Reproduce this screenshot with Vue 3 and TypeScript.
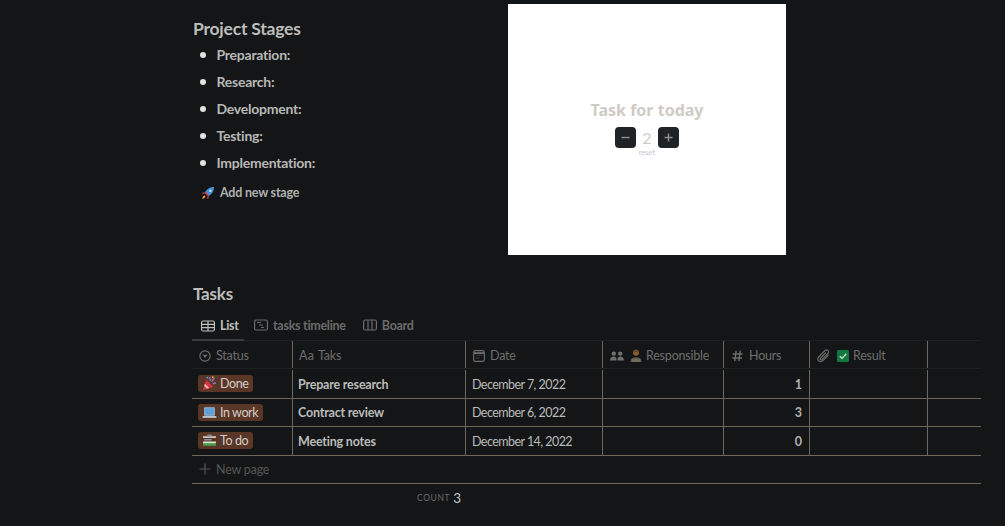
<script setup lang="ts">
interface Row { status: string; icon: string; task: string; date: string; hours: number }
const stages: string[] = ['Preparation:', 'Research:', 'Development:', 'Testing:', 'Implementation:']
const rows: Row[] = [
  { status: 'Done', icon: 'party', task: 'Prepare research', date: 'December 7, 2022', hours: 1 },
  { status: 'In work', icon: 'laptop', task: 'Contract review', date: 'December 6, 2022', hours: 3 },
  { status: 'To do', icon: 'todo', task: 'Meeting notes', date: 'December 14, 2022', hours: 0 }
]
</script>

<template>
  <main class="page">
    <section class="top">
      <div class="stages">
        <h2 class="h-stages">Project Stages</h2>
        <ul class="stage-list">
          <li v-for="s in stages" :key="s">{{ s }}</li>
        </ul>
        <div class="add">
          <svg class="rocket" width="14" height="14" viewBox="0 0 14 14">
            <path d="M13 1C9 1 5.500 3 4 6.500l3.500 3.500C11 8.500 13 5 13 1z" fill="#3f8fd6" />
            <path d="M4.500 6 7.500 9 6.500 10 3.500 7z" fill="#d9394a" />
            <circle cx="9.300" cy="4.700" r="1.300" fill="#bfe3f7" />
            <path d="M4 6 1.800 6.500 1 8.500 3.500 7.500zM8 10l-.5 2.200-2 .8 1-2.500z" fill="#c8384a" />
            <path d="M3.500 9.500C2 10 1.500 11.500 1 13c1.500-.5 3-1 3.500-2.500z" fill="#f2a33a" />
          </svg>
          <span>Add new stage</span>
        </div>
      </div>
      <div class="embed">
        <div class="embed-title">Task for today</div>
        <div class="counter">
          <span class="cbtn">
            <svg width="9" height="9" viewBox="0 0 9 9" stroke="#8f9192" stroke-width="1.400"><path d="M.5 4.500h8" /></svg>
          </span>
          <span class="cval">2</span>
          <span class="cbtn">
            <svg width="9" height="9" viewBox="0 0 9 9" stroke="#8f9192" stroke-width="1.400"><path d="M.5 4.500h8M4.500.5v8" /></svg>
          </span>
        </div>
        <div class="reset">reset</div>
      </div>
    </section>

    <h2 class="h-tasks">Tasks</h2>
    <nav class="tabs">
      <div class="tab active">
        <svg width="14" height="12" viewBox="0 0 14 12" fill="none" stroke="currentColor" stroke-width="1.200">
          <rect x=".6" y="1" width="12.800" height="10" rx="1.500" />
          <path d="M.6 4.300h12.800M.6 7.600h12.800M7 1v10" />
        </svg>
        <span>List</span>
      </div>
      <div class="tab">
        <svg width="14" height="12" viewBox="0 0 14 12" fill="none" stroke="currentColor" stroke-width="1.200">
          <rect x=".6" y="1" width="12.800" height="10" rx="1.500" />
          <path d="M3 3.500h4M5 6h4M7 8.500h3" />
        </svg>
        <span>tasks timeline</span>
      </div>
      <div class="tab">
        <svg width="14" height="12" viewBox="0 0 14 12" fill="none" stroke="currentColor" stroke-width="1.200">
          <rect x=".6" y="1" width="12.800" height="10" rx="1.500" />
          <path d="M5 1v10M9 1v10" />
        </svg>
        <span>Board</span>
      </div>
    </nav>

    <div class="table">
      <div class="row head">
        <div class="cell">
          <svg width="12" height="12" viewBox="0 0 14 14" fill="none" stroke="currentColor" stroke-width="1.300">
            <circle cx="7" cy="7" r="6" />
            <path d="M4 5.400h6L7 9.400z" fill="currentColor" stroke="none" />
          </svg>
          <span>Status</span>
        </div>
        <div class="cell tight"><span class="aa">Aa</span><span>Taks</span></div>
        <div class="cell">
          <svg width="12" height="12" viewBox="0 0 13 13" fill="none" stroke="currentColor" stroke-width="1.200">
            <rect x=".7" y=".7" width="11.600" height="11.600" rx="1.800" />
            <path d="M.7 3.400h11.600" stroke-width="2" />
            <path d="M3 6h7M3 8.500h4" stroke-opacity=".35" />
          </svg>
          <span>Date</span>
        </div>
        <div class="cell resp">
          <svg class="group" width="14" height="10" viewBox="0 0 14 10" fill="currentColor">
            <circle cx="3.800" cy="2.600" r="2.200" />
            <circle cx="10.200" cy="2.600" r="2.200" />
            <path d="M0 9.500C0 6.800 1.700 5.600 3.800 5.600S6.600 6.800 6.600 9.500zM7.400 9.500C7.400 6.800 8.100 5.600 10.200 5.600S14 6.800 14 9.500z" />
          </svg>
          <svg class="person" width="12" height="13" viewBox="0 0 13 14">
            <path d="M.5 14c0-3.500 2-5 6-5s6 1.500 6 5z" fill="#6f6a5f" />
            <circle cx="6.500" cy="4" r="3.200" fill="#a9742f" />
            <path d="M3.300 3.500C3.500 1.500 5 .5 6.500.5s3 1 3.200 3z" fill="#7d5426" />
            <path d="M2 11h9v3H2z" fill="#8a846f" />
          </svg>
          <span>Responsible</span>
        </div>
        <div class="cell hours">
          <svg width="11" height="12" viewBox="0 0 12 13" fill="none" stroke="currentColor" stroke-width="1.500">
            <path d="M4.500 .8 3 12.200M9 .8 7.500 12.200M.8 4.300h10.600M.5 8.700h10.600" />
          </svg>
          <span>Hours</span>
        </div>
        <div class="cell result">
          <svg class="clip" width="13" height="14" viewBox="0 0 13 14" fill="none" stroke="currentColor" stroke-width="1.100">
            <path d="M11.500 6 6 11.700c-1.300 1.300-3.200 1.300-4.300.2s-1-3 .2-4.200L8 1.500c.9-.9 2.200-.9 3 0s.8 2-.1 2.900L5 10.500c-.5.500-1.200.5-1.600.1s-.4-1.100.1-1.600L8.800 3.600" />
          </svg>
          <svg width="12" height="12" viewBox="0 0 12 12">
            <rect width="12" height="12" rx="1.500" fill="#12783f" />
            <path d="M2.800 6.200 5 8.400 9.300 3.800" fill="none" stroke="#cfe3d6" stroke-width="1.300" />
          </svg>
          <span>Result</span>
        </div>
        <div class="cell"></div>
      </div>

      <div v-for="r in rows" :key="r.task" class="row body">
        <div class="cell tag-cell">
          <span class="tag">
            <svg v-if="r.icon === 'party'" width="15" height="15" viewBox="0 0 14 14">
              <path d="M.8 13.400 4 3.500l6.500 6.500z" fill="#d8334a" />
              <path d="M2.800 7.200 6.800 11.200l-2 .8-2.800-2.800z" fill="#f0b8a8" />
              <path d="M7 1 7.800 4.500M11.500 1.500 9 5.500M13 6.500 10 7.200" stroke="#8a78c8" stroke-width="1.300" fill="none" />
              <circle cx="10" cy="1" r=".8" fill="#e8c34a" />
              <circle cx="5" cy="1.500" r=".8" fill="#57b0d8" />
            </svg>
            <svg v-else-if="r.icon === 'laptop'" width="15" height="15" viewBox="0 0 14 14">
              <rect x="2" y="2" width="10" height="8" rx=".6" fill="#8fb8d8" />
              <rect x="3" y="3" width="8" height="6" fill="#5d9fd6" />
              <path d="M.6 10.300h12.800v1.700H.6z" fill="#bcc8d2" />
            </svg>
            <svg v-else width="15" height="15" viewBox="0 0 14 14">
              <path d="M1 3h12v1.600H1z" fill="#d8d4c6" />
              <path d="M5 1.500h4v2H5zM2 5.500h7v1.500H2z" fill="#8a90a0" />
              <path d="M1 8h12v4H1z" fill="#4a9a4e" />
              <path d="M1 8h12v1.500H1z" fill="#e0e0d4" />
            </svg>
            <span>{{ r.status }}</span>
          </span>
        </div>
        <div class="cell strong">{{ r.task }}</div>
        <div class="cell date">{{ r.date }}</div>
        <div class="cell"></div>
        <div class="cell num">{{ r.hours }}</div>
        <div class="cell"></div>
        <div class="cell"></div>
      </div>

      <div class="new-page">
        <svg width="12" height="12" viewBox="0 0 12 12" fill="none" stroke="currentColor" stroke-width="1.200">
          <path d="M6 .5v11M.5 6h11" />
        </svg>
        <span>New page</span>
      </div>
      <div class="count"><span class="count-label">COUNT</span><span class="count-val">3</span></div>
    </div>
  </main>
</template>

<style>
html, body { background: #131517; }
</style>

<style scoped>
.page {
  box-sizing: border-box;
  width: 1005px;
  height: 526px;
  overflow: hidden;
  padding-left: 192px;
  background: #131517;
  font-family: Lato, "Liberation Sans", sans-serif;
  color: #c8c8c6;
}
.top { display: flex; height: 278px; }
.stages { width: 316px; padding-left: 1px; box-sizing: border-box; }
.h-stages { margin: 19px 0 0; font-size: 17.500px; line-height: 20px; font-weight: 700; color: #bdbdbb; letter-spacing: -.22px; }
.stage-list { margin: 2px 0 0; padding: 0 0 0 23.500px; list-style: none; }
.stage-list li {
  position: relative;
  height: 27px;
  line-height: 27px;
  font-size: 14px;
  font-weight: 700;
  letter-spacing: -.24px;
  color: #b8b8b6;
}
.stage-list li::before {
  content: "";
  position: absolute;
  left: -16.500px;
  top: 11px;
  width: 6px;
  height: 6px;
  border-radius: 50%;
  background: #e2e2e0;
}
.add { display: flex; align-items: center; gap: 5px; margin: 4px 0 0 8px; height: 25px; font-size: 12.500px; font-weight: 700; letter-spacing: -.2px; color: #b0b0ae; }
.embed {
  box-sizing: border-box;
  width: 278px;
  height: 251px;
  margin-top: 4px;
  background: #fff;
  display: flex;
  flex-direction: column;
  align-items: center;
  padding-top: 95px;
}
.embed-title { font-size: 16px; line-height: 22px; font-weight: 700; color: #cfcbc4; font-family: "Noto Sans", "Open Sans", sans-serif; }
.counter { display: flex; align-items: center; margin-top: 6px; }
.cbtn {
  width: 21px;
  height: 21px;
  border-radius: 4px;
  background: #1f2326;
  display: flex;
  align-items: center;
  justify-content: center;
}
.cval { width: 22px; text-align: center; font-size: 16px; color: #cfcbc4; }
.reset { font-size: 7.500px; line-height: 8px; margin-top: 1px; color: #c9c6cd; }
.h-tasks { margin: 0 0 0 1px; font-size: 17px; line-height: 20px; font-weight: 700; color: #bdbdbb; padding-top: 6px; letter-spacing: -.2px; }
.tabs { display: flex; height: 32px; margin-top: 5px; width: 789px; border-bottom: 1px solid #1e2022; box-sizing: border-box; }
.tab { display: flex; align-items: center; gap: 5px; padding: 1px 7px 0 10px; font-size: 12.500px; font-weight: 700; letter-spacing: -.28px; color: #6b6b6a; }
.tab.active { color: #bebebc; box-shadow: inset 0 -2px 0 #3a3c3e; width: 52px; padding: 1px 0 0 9px; box-sizing: border-box; height: 32px; }
.table { width: 789px; }
.row { display: grid; grid-template-columns: 101px 173px 137px 121px 86px 118px 53px; }
.head { height: 28px; border-bottom: 1px solid #1e2022; box-sizing: border-box; margin-bottom: 1px; }
.body { height: 28.500px; box-sizing: border-box; border-bottom: 1px solid #6f675a; }
.cell {
  display: flex;
  align-items: center;
  gap: 5px;
  padding: 0 7px;
  box-sizing: border-box;
  border-right: 1px solid #6f675a;
  font-size: 12.500px;
  min-width: 0;
}
.row .cell:last-child { border-right: none; }
.head .cell { color: #6e6e6c; font-size: 12.500px; letter-spacing: -.2px; padding-top: 2px; }
.head .tight { gap: 4px; padding-left: 6px; }
.aa { letter-spacing: .2px; }
.head .resp { gap: 4px; }
.group { margin-right: 2px; }
.person { opacity: .8; }
.head .hours { padding-left: 8px; gap: 6px; }
.head .result { padding-left: 7px; gap: 4px; }
.clip { margin-right: 3px; }
.tag-cell { padding-left: 6px; }
.tag {
  display: inline-flex;
  align-items: center;
  gap: 3px;
  height: 17px;
  padding: 0 5px 0 4px;
  border-radius: 3px;
  background: #5a3627;
  color: #d3cdc8;
  font-size: 12.500px;
  letter-spacing: -.42px;
  white-space: nowrap;
}
.strong { font-weight: 700; color: #bcbcba; padding-left: 5px; padding-top: 1px; letter-spacing: -.2px; }
.date { color: #bbbbb9; padding-left: 6px; padding-top: 1px; font-size: 12.500px; letter-spacing: -.55px; }
.num { justify-content: flex-end; color: #b0b0ae; font-weight: 700; padding-top: 1px; }
.new-page {
  display: flex;
  align-items: center;
  gap: 5px;
  height: 28px;
  box-sizing: border-box;
  padding-left: 7px;
  border-bottom: 1px solid #6f675a;
  color: #555654;
  font-size: 12.500px;
  letter-spacing: -.2px;
}
.count { display: flex; align-items: center; gap: 3px; height: 28px; padding-left: 225px; }
.count-label { font-size: 8.500px; letter-spacing: .6px; color: #6b6b6a; }
.count-val { font-size: 13.500px; color: #c4c4c2; }
</style>
